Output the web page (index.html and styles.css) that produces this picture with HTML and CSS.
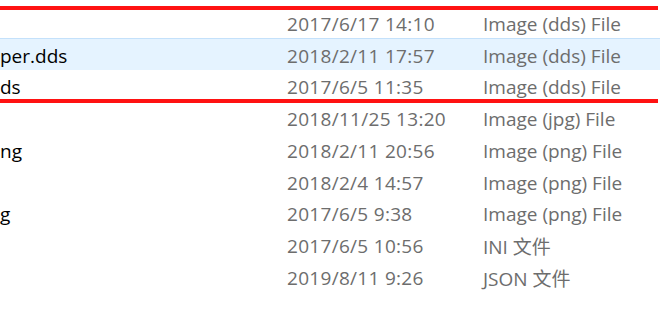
FILE: index.html
```html
<!DOCTYPE html>
<html>
<head>
<meta charset="utf-8">
<link rel="stylesheet" href="styles.css">
</head>
<body>
<div class="list">
  <div class="row"><span class="name"></span><span class="date">2017/6/17 14:10</span><span class="type">Image (dds) File</span></div>
  <div class="row hover"><span class="name">per.dds</span><span class="date">2018/2/11 17:57</span><span class="type">Image (dds) File</span></div>
  <div class="row"><span class="name">ds</span><span class="date">2017/6/5 11:35</span><span class="type">Image (dds) File</span></div>
  <div class="row"><span class="name"></span><span class="date">2018/11/25 13:20</span><span class="type">Image (jpg) File</span></div>
  <div class="row"><span class="name">ng</span><span class="date">2018/2/11 20:56</span><span class="type">Image (png) File</span></div>
  <div class="row"><span class="name"></span><span class="date">2018/2/4 14:57</span><span class="type">Image (png) File</span></div>
  <div class="row"><span class="name">g</span><span class="date">2017/6/5 9:38</span><span class="type">Image (png) File</span></div>
  <div class="row"><span class="name"></span><span class="date">2017/6/5 10:56</span><span class="type">INI 文件</span></div>
  <div class="row"><span class="name"></span><span class="date">2019/8/11 9:26</span><span class="type">JSON 文件</span></div>
  <div class="mark"></div>
</div>
</body>
</html>
```
FILE: styles.css
```css
html, body {
  margin: 0;
  padding: 0;
  background: #ffffff;
  width: 660px;
  height: 330px;
  overflow: hidden;
}
.list {
  position: relative;
  padding-top: 6.5px;
  font-family: "Open Sans", "Noto Sans CJK SC", sans-serif;
  font-size: 19px;
}
.row {
  display: grid;
  grid-template-columns: 287px 196px 1fr;
  align-items: center;
  height: 31.75px;
  box-sizing: border-box;
  padding-top: 2px;
  white-space: nowrap;
  border-top: 1px solid transparent;
}
.row.hover {
  background: #e5f3ff;
  border-top-color: #c4e1fb;
}
.name {
  color: #000000;
}
.date {
  color: #6d6d6d;
  letter-spacing: 0.3px;
}
.type {
  color: #6d6d6d;
}
.mark {
  position: absolute;
  left: 0;
  top: 6px;
  width: 658px;
  height: 97px;
  box-sizing: border-box;
  border-top: 4px solid #ff1212;
  border-bottom: 4px solid #ff1212;
}
```
